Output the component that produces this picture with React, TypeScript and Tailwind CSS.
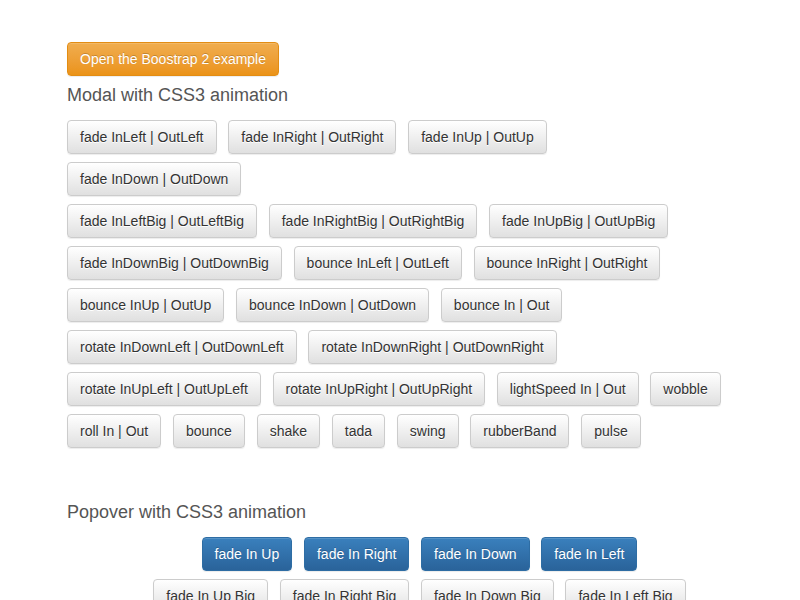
const modalRows: string[][] = [
  ['fade InLeft | OutLeft', 'fade InRight | OutRight', 'fade InUp | OutUp'],
  ['fade InDown | OutDown'],
  ['fade InLeftBig | OutLeftBig', 'fade InRightBig | OutRightBig', 'fade InUpBig | OutUpBig'],
  ['fade InDownBig | OutDownBig', 'bounce InLeft | OutLeft', 'bounce InRight | OutRight'],
  ['bounce InUp | OutUp', 'bounce InDown | OutDown', 'bounce In | Out'],
  ['rotate InDownLeft | OutDownLeft', 'rotate InDownRight | OutDownRight'],
  ['rotate InUpLeft | OutUpLeft', 'rotate InUpRight | OutUpRight', 'lightSpeed In | Out', 'wobble'],
  ['roll In | Out', 'bounce', 'shake', 'tada', 'swing', 'rubberBand', 'pulse'],
]

const popoverPrimary = ['fade In Up', 'fade In Right', 'fade In Down', 'fade In Left']
const popoverDefault = ['fade In Up Big', 'fade In Right Big', 'fade In Down Big', 'fade In Left Big']

const base =
  'h-[34px] px-3 rounded-[4px] border text-[14px] leading-[20px] whitespace-nowrap shadow-[inset_0_1px_0_rgba(255,255,255,0.15),0_1px_1px_rgba(0,0,0,0.075)]'

function DefaultButton({ label }: { label: string }) {
  return (
    <button
      className={`${base} border-[#ccc] text-[#333] bg-gradient-to-b from-white to-[#e0e0e0] [text-shadow:0_1px_0_#fff]`}
    >
      {label}
    </button>
  )
}

function PrimaryButton({ label }: { label: string }) {
  return (
    <button
      className={`${base} border-[#2e6da4] text-white bg-gradient-to-b from-[#3a80bd] to-[#2a639a] [text-shadow:0_-1px_0_rgba(0,0,0,0.2)]`}
    >
      {label}
    </button>
  )
}

export default function App() {
  return (
    <div className="min-h-[600px] bg-white font-['Liberation_Sans',Arial,sans-serif]">
      <div className="ml-[67px] w-[705px] pt-[42px]">
        <button
          className={`${base} border-[#e38d13] text-white bg-gradient-to-b from-[#f0ad4e] to-[#eb9316] [text-shadow:0_-1px_0_rgba(0,0,0,0.2)]`}
        >
          Open the Boostrap 2 example
        </button>

        <h4 className="mt-[9px] mb-[15px] text-[18px] leading-[20px] text-[#555]">Modal with CSS3 animation</h4>

        <div className="flex flex-col gap-2">
          {modalRows.map((row, i) => (
            <div key={i} className="flex gap-x-[11.75px]">
              {row.map((label) => (
                <DefaultButton key={label} label={label} />
              ))}
            </div>
          ))}
        </div>

        <h4 className="mt-[54px] mb-[15px] text-[18px] leading-[20px] text-[#555]">Popover with CSS3 animation</h4>

        <div className="flex flex-col gap-2">
          <div className="flex justify-center gap-x-[11.75px]">
            {popoverPrimary.map((label) => (
              <PrimaryButton key={label} label={label} />
            ))}
          </div>
          <div className="flex justify-center gap-x-[11.75px]">
            {popoverDefault.map((label) => (
              <DefaultButton key={label} label={label} />
            ))}
          </div>
        </div>
      </div>
    </div>
  )
}
